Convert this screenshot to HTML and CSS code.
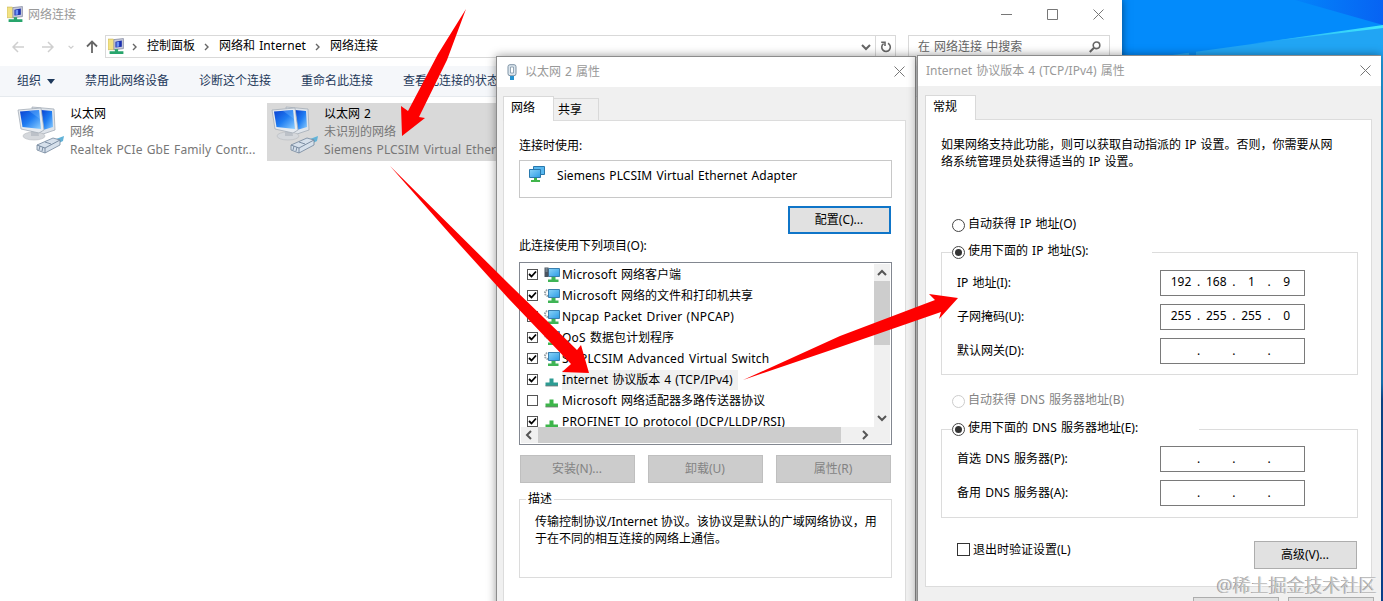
FILE: index.html
```
<!DOCTYPE html>
<html lang="zh-CN">
<head>
    <meta charset="UTF-8">
    <meta name="viewport" content="width=device-width, initial-scale=1.0">
    <title>网络连接</title>
    <link rel="stylesheet" href="styles.css">
</head>
<body>

    <!-- Iconos compartidos -->
    <svg class="sprite" width="0" height="0">
        <defs>
            <linearGradient id="screen" x1="0" y1="0" x2="1" y2="1">
                <stop offset="0" stop-color="#0a3fd0"/>
                <stop offset=".5" stop-color="#1f7df2"/>
                <stop offset="1" stop-color="#8fd0ff"/>
            </linearGradient>
            <linearGradient id="pane" x1="0" y1="0" x2="1" y2="1">
                <stop offset="0" stop-color="#8bd4f8"/>
                <stop offset="1" stop-color="#2d9be6"/>
            </linearGradient>
        </defs>
        <symbol id="i-net" viewBox="0 0 16 16">
            <path d="M0 1h5l1 1h3v9H0z" fill="#f2e283" stroke="#c9b75c" stroke-width=".6"/>
            <path d="M5.500 1.500l9-1v9.500l-9 1z" fill="#c6cadb" stroke="#8489a0" stroke-width=".7"/>
            <path d="M7 3.500L13 2.300v6L7 9z" fill="#1a2fae"/>
            <path d="M8 4l2.500-.5v4.500L8 8.500z" fill="#6f95f4"/>
            <path d="M6.500 10.500h3V12.500h5v2.500H1.500v-2.500h5z" fill="#28a56c"/>
        </symbol>
        <symbol id="i-adapter" viewBox="0 0 48 48">
            <path d="M15 1l22 2 1 21-12 4-9-3z" fill="#dfe4ea" stroke="#a5adb7" stroke-width=".8"/>
            <path d="M24 4l11 1 1 16-10 3z" fill="url(#screen)"/>
            <ellipse cx="17" cy="30" rx="11" ry="4" fill="#d5d8dc" stroke="#b5b8bd" stroke-width=".6"/>
            <path d="M14 24h7l1 6h-8z" fill="#bcc1c8"/>
            <path d="M1 4l23-2 3 22-5 3L4 23z" fill="#e6eaef" stroke="#a5adb7" stroke-width=".8"/>
            <path d="M3 5.500L22 4l2 19L5.500 21z" fill="url(#screen)"/>
            <path d="M12 5l10-1 1 9z" fill="#7ec1ff" opacity=".35"/>
            <path d="M39 33l8-3-1 5-8 4z" fill="#62b3d8"/>
            <path d="M20 39l16-7 7 2v5l-15 8-8-3z" fill="#d6e0eb" stroke="#72859b" stroke-width=".8"/>
            <path d="M20 39l8 3 15-8M28 42v5M23 40l-1 4M26 41l-1 4M28 36l6 2" fill="none" stroke="#72859b" stroke-width=".9"/>
        </symbol>
        <symbol id="i-client" viewBox="0 0 17 16">
            <path d="M4.500 1.500h11v8h-11z" fill="url(#pane)" stroke="#3a7fae"/>
            <path d="M7.500 10h4v2.500h3V15H4v-2.500h3.500z" fill="#3fb455"/>
            <path d="M.5 .5h4v9.500h-4z" fill="#4b5560"/>
            <path d="M1.500 2h2M1.500 4h2" stroke="#9fb0bb"/>
        </symbol>
        <symbol id="i-service" viewBox="0 0 17 16">
            <circle cx="4" cy="5" r="3" fill="none" stroke="#9aa3a8" stroke-width="2" stroke-dasharray="1.500 .8"/>
            <path d="M4.500 1.500h11v8h-11z" fill="url(#pane)" stroke="#3a7fae"/>
            <path d="M7.500 10h4v2.500h3V15H4v-2.500h3.500z" fill="#3fb455"/>
        </symbol>
        <symbol id="i-proto" viewBox="0 0 17 16">
            <path d="M5.500 6.500h4v4h4.500v3.500H1.500v-3.500h4z" fill="currentColor"/>
            <path d="M1.500 14h12.500" stroke="#777" stroke-width=".8"/>
        </symbol>
        <symbol id="i-tick" viewBox="0 0 11 11">
            <path d="M2 5L4.500 7.500L9 2.500" fill="none" stroke="#000" stroke-width="1.800"/>
        </symbol>
        <symbol id="i-close" viewBox="0 0 11 11">
            <path d="M.5 .5l10 10M10.500 .5l-10 10" stroke="currentColor" fill="none"/>
        </symbol>
        <symbol id="i-chev" viewBox="0 0 10 10">
            <path d="M1 3l4 4 4-4" fill="none" stroke="currentColor" stroke-width="2"/>
        </symbol>
        <symbol id="i-sep" viewBox="0 0 6 8">
            <path d="M1 1l3 3-3 3" fill="none" stroke="#666" stroke-width="1.400"/>
        </symbol>
    </svg>

    <!-- Fondo de escritorio -->
    <svg class="wallpaper" viewBox="0 0 1383 601">
        <defs>
            <linearGradient id="edge" x1="0" y1="0" x2="0" y2="1">
                <stop offset="0" stop-color="#22a6ee"/>
                <stop offset=".6" stop-color="#1b83cd"/>
                <stop offset=".63" stop-color="#0e4f9c"/>
                <stop offset="1" stop-color="#0b4ca6"/>
            </linearGradient>
            <linearGradient id="beam" x1="0" y1="0" x2="1" y2="0">
                <stop offset="0" stop-color="#21a5f4"/>
                <stop offset="1" stop-color="#41e8fc"/>
            </linearGradient>
            <linearGradient id="dusk" x1="0" y1="0" x2="1" y2="0">
                <stop offset="0" stop-color="#0384fa"/>
                <stop offset="1" stop-color="#0763f3"/>
            </linearGradient>
        </defs>
        <rect x="1100" width="283" height="601" fill="#038bfb"/>
        <path d="M1295 0h88v25z" fill="url(#dusk)"/>
        <path d="M1165 56l218-30v70h-218z" fill="#21a5f4"/>
        <path d="M1250 44L1383 25v3z" fill="url(#beam)"/>
        <path d="M1189 50h7v7h-7z" fill="#078cf3"/>
        <rect x="1378" y="56" width="5" height="545" fill="url(#edge)"/>
    </svg>

    <!-- Explorador -->
    <div class="window explorer">
        <div class="explorer-title">
            <svg class="net-icon" width="17" height="17"><use href="#i-net"/></svg>
            <span class="title-text">网络连接</span>
            <div class="caption">
                <svg width="11" height="11"><path d="M0 5.500h11" stroke="#777"/></svg>
                <svg width="11" height="11"><path d="M.5 .5h10v10H.5z" fill="none" stroke="#777"/></svg>
                <svg width="11" height="11"><use href="#i-close"/></svg>
            </div>
        </div>

        <div class="nav">
            <div class="nav-arrows">
                <svg width="12" height="12" viewBox="0 0 12 12"><path d="M12 6H1M6 1L1 6l5 5" fill="none" stroke="#cfcfcf" stroke-width="1.500"/></svg>
                <svg width="12" height="12" viewBox="0 0 12 12"><path d="M0 6h11M6 1l5 5-5 5" fill="none" stroke="#cfcfcf" stroke-width="1.500"/></svg>
                <svg class="recent" width="6" height="6" viewBox="0 0 10 10"><use href="#i-chev"/></svg>
                <svg width="12" height="13" viewBox="0 0 12 13"><path d="M6 13V1.500M1 6.500l5-5 5 5" fill="none" stroke="#666" stroke-width="1.800"/></svg>
            </div>
            <div class="address">
                <svg width="17" height="17"><use href="#i-net"/></svg>
                <svg class="sep first" width="6" height="8"><use href="#i-sep"/></svg>
                <span>控制面板</span>
                <svg class="sep" width="6" height="8"><use href="#i-sep"/></svg>
                <span>网络和 <span class="en">Internet</span></span>
                <svg class="sep" width="6" height="8"><use href="#i-sep"/></svg>
                <span>网络连接</span>
                <svg class="drop" width="10" height="10"><use href="#i-chev"/></svg>
                <div class="refresh">
                    <svg width="12" height="12" viewBox="0 0 12 12"><path d="M8 2.300A4.300 4.300 0 1 1 3.600 2.600M1.200 1.200h3.800v3.800" fill="none" stroke="#666" stroke-width="1.600"/></svg>
                </div>
            </div>
            <div class="search">
                <span>在 网络连接 中搜索</span>
                <svg width="12" height="12" viewBox="0 0 12 12"><circle cx="7.500" cy="4.300" r="3.300" fill="none" stroke="#666" stroke-width="1.600"/><path d="M5 6.800L.8 11" stroke="#666" stroke-width="2"/></svg>
            </div>
        </div>

        <div class="toolbar">
            <span class="organize">组织 <i class="caret"></i></span>
            <span>禁用此网络设备</span>
            <span>诊断这个连接</span>
            <span>重命名此连接</span>
            <span>查看此连接的状态</span>
        </div>

        <div class="connections">
            <div class="connection">
                <svg width="48" height="48"><use href="#i-adapter"/></svg>
                <div>
                    <p>以太网</p>
                    <p class="dim">网络</p>
                    <p class="dim en">Realtek PCIe GbE Family Contr...</p>
                </div>
            </div>
            <div class="connection selected">
                <svg width="48" height="48"><use href="#i-adapter"/></svg>
                <div>
                    <p>以太网 2</p>
                    <p class="dim">未识别的网络</p>
                    <p class="dim en">Siemens PLCSIM Virtual Ether</p>
                </div>
            </div>
        </div>
    </div>

    <!-- Propiedades del adaptador -->
    <div class="window dialog adapter-dialog">
        <div class="dialog-title">
            <svg class="plug" width="10" height="17" viewBox="0 0 10 17"><rect x="1" y=".7" width="8" height="11" rx="2" fill="#dce6ee" stroke="#7e93a5"/><path d="M3.500 3h3v6h-3z" fill="#fff" stroke="#7e93a5" stroke-width=".8"/><path d="M3 12h4v4H3z" fill="#2592cf"/></svg>
            <span class="title-text">以太网 2 属性</span>
            <svg class="close" width="11" height="11"><use href="#i-close"/></svg>
        </div>
        <div class="tabs">
            <div class="tab active">网络</div>
            <div class="tab">共享</div>
        </div>
        <div class="panel">
            <p class="label">连接时使用:</p>
            <div class="device">
                <svg width="18" height="17" viewBox="0 0 18 17"><path d="M5.500 .5h11v8h-11z" fill="#58b7ee" stroke="#2878ad"/><path d="M1.500 3.500h11v8h-11z" fill="url(#pane)" stroke="#2878ad"/><path d="M6 12h3v2h3v2H3v-2h3z" fill="#41b54c"/></svg>
                <span class="en">Siemens PLCSIM Virtual Ethernet Adapter</span>
            </div>
            <div class="button focus">配置(C)...</div>
            <p class="label items-label">此连接使用下列项目(O):</p>

            <div class="list">
                <div class="list-body">
                    <ul>
                        <li><i class="check"><svg width="11" height="11"><use href="#i-tick"/></svg></i><svg width="17" height="16"><use href="#i-client"/></svg><span><span class="en">Microsoft</span> 网络客户端</span></li>
                        <li><i class="check"><svg width="11" height="11"><use href="#i-tick"/></svg></i><svg width="17" height="16"><use href="#i-service"/></svg><span><span class="en">Microsoft</span> 网络的文件和打印机共享</span></li>
                        <li><i class="check"><svg width="11" height="11"><use href="#i-tick"/></svg></i><svg width="17" height="16"><use href="#i-service"/></svg><span class="en">Npcap Packet Driver (NPCAP)</span></li>
                        <li><i class="check"><svg width="11" height="11"><use href="#i-tick"/></svg></i><svg width="17" height="16"><use href="#i-service"/></svg><span><span class="en">QoS</span> 数据包计划程序</span></li>
                        <li><i class="check"><svg width="11" height="11"><use href="#i-tick"/></svg></i><svg width="17" height="16"><use href="#i-service"/></svg><span class="en">S7-PLCSIM Advanced Virtual Switch</span></li>
                        <li><i class="check"><svg width="11" height="11"><use href="#i-tick"/></svg></i><svg class="teal" width="17" height="16"><use href="#i-proto"/></svg><span class="current">Internet 协议版本 4 (TCP/IPv4)</span></li>
                        <li><i class="check"></i><svg class="green" width="17" height="16"><use href="#i-proto"/></svg><span><span class="en">Microsoft</span> 网络适配器多路传送器协议</span></li>
                        <li><i class="check"><svg width="11" height="11"><use href="#i-tick"/></svg></i><svg class="green" width="17" height="16"><use href="#i-proto"/></svg><span class="en">PROFINET IO protocol (DCP/LLDP/RSI)</span></li>
                    </ul>
                    <div class="vscroll">
                        <svg class="up" width="10" height="10"><use href="#i-chev"/></svg>
                        <div class="thumb"></div>
                        <svg class="down" width="10" height="10"><use href="#i-chev"/></svg>
                    </div>
                </div>
                <div class="hscroll">
                    <svg class="left" width="10" height="10"><use href="#i-chev"/></svg>
                    <div class="thumb"></div>
                    <svg class="right" width="10" height="10"><use href="#i-chev"/></svg>
                </div>
            </div>

            <div class="actions">
                <div class="button disabled">安装(N)...</div>
                <div class="button disabled">卸载(U)</div>
                <div class="button disabled">属性(R)</div>
            </div>

            <fieldset class="description">
                <legend>描述</legend>
                <p>传输控制协议/Internet 协议。该协议是默认的广域网络协议，用<br>于在不同的相互连接的网络上通信。</p>
            </fieldset>
        </div>
    </div>

    <!-- Propiedades de IPv4 -->
    <div class="window dialog ip-dialog">
        <div class="dialog-title">
            <span class="title-text">Internet 协议版本 4 (TCP/IPv4) 属性</span>
            <svg class="close" width="11" height="11"><use href="#i-close"/></svg>
        </div>
        <div class="tabs">
            <div class="tab active">常规</div>
        </div>
        <div class="panel">
            <p class="intro">如果网络支持此功能，则可以获取自动指派的 IP 设置。否则，你需要从网<br>络系统管理员处获得适当的 IP 设置。</p>

            <div class="option auto-ip"><i class="radio"></i><span>自动获得 IP 地址(O)</span></div>
            <fieldset class="group ip-group">
                <legend class="option"><i class="radio on"></i><span>使用下面的 IP 地址(S):</span></legend>
                <div class="field"><span>IP 地址(I):</span><div class="ip"><b>192</b>.<b>168</b>.<b>1</b>.<b>9</b></div></div>
                <div class="field"><span>子网掩码(U):</span><div class="ip"><b>255</b>.<b>255</b>.<b>255</b>.<b>0</b></div></div>
                <div class="field"><span>默认网关(D):</span><div class="ip empty"><b></b>.<b></b>.<b></b>.<b></b></div></div>
            </fieldset>

            <div class="option auto-dns off"><i class="radio"></i><span>自动获得 <span class="en">DNS</span> 服务器地址(B)</span></div>
            <fieldset class="group dns-group">
                <legend class="option"><i class="radio on"></i><span>使用下面的 <span class="en">DNS</span> 服务器地址(E):</span></legend>
                <div class="field"><span>首选 <span class="en">DNS</span> 服务器(P):</span><div class="ip empty"><b></b>.<b></b>.<b></b>.<b></b></div></div>
                <div class="field"><span>备用 <span class="en">DNS</span> 服务器(A):</span><div class="ip empty"><b></b>.<b></b>.<b></b>.<b></b></div></div>
            </fieldset>

            <div class="footer-row">
                <div class="validate"><i class="box"></i><span>退出时验证设置(L)</span></div>
                <div class="button">高级(V)...</div>
            </div>
        </div>
        <div class="dialog-buttons">
            <div class="button"></div>
            <div class="button"></div>
        </div>
    </div>

    <!-- Flechas -->
    <svg class="arrows" viewBox="0 0 1383 601">
        <path d="M466 9L438 54L408 111L401 106L402 136L425 118L419 117L447 60Z"/>
        <path d="M390 166L510 285L577 350L581 345L589 373L562 372L571 364L508 298L450 234Z"/>
        <path d="M743 380L840 336L935 300L929 294L958 298L939 319L941 312L840 347Z"/>
    </svg>

    <div class="watermark">@稀土掘金技术社区</div>

</body>
</html>
```
FILE: styles.css
```
* {
    box-sizing: border-box;
}

body {
    margin: 0;
    width: 1383px;
    height: 601px;
    overflow: hidden;
    position: relative;
    font-family: "Noto Sans", "Noto Sans CJK SC", sans-serif;
    font-size: 12px;
    line-height: 18px;
    word-spacing: 1px;
    color: #000;
}

p {
    margin: 0;
}

i {
    font-style: normal;
}

svg {
    display: block;
    flex: none;
}

span {
    white-space: nowrap;
}

.en {
    letter-spacing: 0.1px;
}

.sprite {
    position: absolute;
}

.wallpaper,
.arrows {
    position: absolute;
    left: 0;
    top: 0;
    width: 1383px;
    height: 601px;
}

.arrows {
    fill: #fe0000;
}

/* Ventanas */
.window {
    position: absolute;
    overflow: hidden;
}

.title-text {
    color: #999;
}

/* Explorador */
.explorer {
    left: 0;
    top: 0;
    width: 1122px;
    height: 601px;
    background-color: #fff;
    box-shadow: 0 0 8px rgba(0, 0, 0, 0.5);
}

.explorer-title {
    display: flex;
    align-items: center;
    height: 30px;
    padding: 0 18px 2px 7px;
}

.explorer-title .title-text {
    margin: 1px 0 0 4px;
}

.caption {
    display: flex;
    gap: 35px;
    margin-left: auto;
    color: #777;
}

.nav {
    display: flex;
    align-items: center;
    height: 36px;
    padding-bottom: 3px;
}

.nav-arrows {
    display: flex;
    align-items: center;
    width: 105px;
    padding-left: 12px;
}

.nav-arrows svg {
    margin-right: 18px;
}

.nav-arrows svg.recent {
    margin: 0 12px 0 -4px;
    color: #ccc;
}

.nav-arrows svg:last-child {
    margin-right: 0;
}

.address {
    display: flex;
    align-items: center;
    width: 791px;
    height: 23px;
    padding-left: 2px;
    border: 1px solid #d9d9d9;
}

.address span {
    margin-top: -1px;
}

.address .sep {
    margin: 0 9px;
}

.address .sep.first {
    margin-left: 7px;
}

.address .drop {
    margin-left: auto;
    margin-right: 4px;
    color: #666;
}

.refresh {
    display: flex;
    align-items: center;
    width: 20px;
    height: 21px;
    padding-left: 4px;
    border-left: 1px solid #d9d9d9;
}

.search {
    display: flex;
    align-items: center;
    justify-content: space-between;
    width: 202px;
    height: 23px;
    margin-left: 12px;
    padding: 0 8px 0 9px;
    border: 1px solid #d9d9d9;
    color: #666;
}

.toolbar {
    display: flex;
    gap: 30px;
    height: 31px;
    padding: 6px 0 0 17px;
    border-bottom: 1px solid #e6eaee;
    background-color: #f5f7fa;
    color: #1e395b;
}

.organize {
    display: flex;
    align-items: center;
    height: 18px;
}

.caret {
    margin-left: 6px;
    border: 4px solid transparent;
    border-top: 5px solid #1e395b;
    border-bottom: 0;
}

.connections {
    display: flex;
    gap: 2px;
    padding: 6px 0 0 13px;
}

.connection {
    display: flex;
    width: 252px;
    height: 58px;
    padding: 2px 0 0 4px;
}

.connection > div {
    margin-left: 5px;
    white-space: nowrap;
}

.connection svg {
    margin-top: 1px;
}

.connection.selected {
    width: 260px;
    background-color: #d9d9d9;
}

.dim {
    color: #777;
}

/* Cuadros de diálogo */
.dialog {
    height: 560px;
    background-color: #f0f0f0;
    border: 1px solid #8c8c8c;
    box-shadow: 0 0 9px rgba(0, 0, 0, 0.4);
}

.adapter-dialog {
    left: 496px;
    top: 56px;
    width: 420px;
}

.ip-dialog {
    left: 917px;
    top: 55px;
    width: 464px;
    border-right: 0;
}

.dialog-title {
    display: flex;
    align-items: center;
    height: 30px;
    padding-left: 10px;
    background-color: #fff;
}

.dialog-title .plug {
    margin-right: 8px;
}

.dialog-title .close {
    margin: -2px 10px 0 auto;
    color: #777;
}

.tabs {
    display: flex;
    align-items: flex-end;
    height: 33px;
    padding-left: 6px;
}

.tab {
    width: 45px;
    height: 22px;
    padding: 2px 0 0 4px;
    border: 1px solid #d9d9d9;
    border-left: 0;
    border-bottom: 0;
}

.tab.active {
    position: relative;
    z-index: 1;
    width: 51px;
    height: 25px;
    margin-bottom: -1px;
    padding: 2px 0 0 7px;
    border-left: 1px solid #d9d9d9;
    background-color: #fff;
}

.panel {
    border: 1px solid #dcdcdc;
    background-color: #fff;
}

.button {
    display: flex;
    align-items: center;
    justify-content: center;
    width: 103px;
    height: 28px;
    padding-right: 1px;
    border: 1px solid #adadad;
    background-color: #e1e1e1;
}

.button.focus {
    border: 2px solid #0f75c8;
}

.button.disabled {
    width: 115px;
    border-color: #bfbfbf;
    background-color: #ccc;
    color: #838383;
}

/* Propiedades del adaptador */
.adapter-dialog .panel {
    width: 403px;
    height: 500px;
    margin-left: 6px;
    padding: 16px 13px 0 15px;
}

.device {
    display: flex;
    height: 38px;
    margin-top: 5px;
    padding: 5px 0 0 8px;
    border: 1px solid #c8c8c8;
}

.device span {
    margin: 1px 0 0 11px;
    letter-spacing: 0.08px;
}

.adapter-dialog .focus {
    margin: 8px 0 0 269px;
}

.items-label {
    margin-top: 3px;
}

.list {
    width: 373px;
    height: 183px;
    margin-top: 7px;
    padding: 1px;
    border: 1px solid #828790;
}

.list-body {
    display: flex;
    height: 163px;
    overflow: hidden;
}

.list ul {
    flex: 1;
    margin: 0;
    padding: 0 0 0 6px;
    list-style: none;
}

.list li {
    display: flex;
    align-items: center;
    height: 21px;
}

.list li > svg {
    margin: 0 1px 0 6px;
}

.list .en {
    letter-spacing: 0.2px;
}

.check {
    width: 11px;
    height: 11px;
    flex: none;
    margin-top: -1px;
    outline: 1px solid #555;
    outline-offset: -1px;
}

.current {
    padding: 1px 5px 1px 0;
    background-color: #f0f0f0;
}

.teal {
    color: #2d9c93;
}

.green {
    color: #3db54a;
}

.vscroll {
    display: flex;
    flex-direction: column;
    align-items: center;
    width: 16px;
    padding: 4px 0;
    background-color: #f0f0f0;
    color: #555;
}

.vscroll .thumb {
    width: 16px;
    height: 64px;
    margin-top: 3px;
    background-color: #cdcdcd;
}

.vscroll .down {
    margin-top: auto;
}

.up {
    transform: rotate(180deg);
}

.hscroll {
    display: flex;
    align-items: center;
    height: 16px;
    padding: 0 20px 0 3px;
    background-color: #f0f0f0;
    color: #555;
}

.hscroll .thumb {
    width: 303px;
    height: 16px;
    margin-left: 4px;
    background-color: #cdcdcd;
}

.left {
    transform: rotate(90deg);
}

.right {
    margin-left: auto;
    transform: rotate(-90deg);
}

.actions {
    display: flex;
    gap: 13px;
    margin: 10px 0 0 1px;
}

fieldset {
    margin: 0;
    padding: 0;
    border: 1px solid #dcdcdc;
}

.description {
    height: 88px;
    margin-top: 7px;
}

.description legend {
    margin-left: 6px;
    padding: 0 2px;
}

.description p {
    padding: 5px 0 0 15px;
    line-height: 17px;
    white-space: nowrap;
    word-spacing: 0;
}

/* Propiedades de IPv4 */
.ip-dialog .dialog-title {
    padding-left: 8px;
}

.ip-dialog .tabs {
    padding-left: 7px;
}

.ip-dialog .panel {
    width: 447px;
    height: 468px;
    margin-left: 7px;
    padding: 16px 13px 0 15px;
}

.intro {
    line-height: 17px;
    white-space: nowrap;
}

.option {
    display: flex;
    align-items: center;
    height: 20px;
}

.option span {
    margin-left: 3px;
    margin-top: -2px;
}

.option span span {
    margin: 0;
}

.radio {
    display: flex;
    align-items: center;
    justify-content: center;
    width: 13px;
    height: 13px;
    border: 1px solid #444;
    border-radius: 50%;
}

.radio.on::after {
    content: "";
    width: 7px;
    height: 7px;
    border-radius: 50%;
    background-color: #333;
}

.off {
    color: #838383;
}

.off .radio {
    border-color: #ccc;
}

.auto-ip {
    margin: 45px 0 7px 11px;
}

.auto-dns {
    margin: 16px 0 8px 11px;
}

.group {
    width: 417px;
}

.group legend {
    width: 200px;
    margin-left: 10px;
    padding: 0;
}

.ip-group {
    height: 133px;
}

.dns-group {
    height: 99px;
}

.dns-group legend {
    width: 247px;
}

.field {
    display: flex;
    justify-content: space-between;
    align-items: center;
    height: 26px;
    margin: 8px 52px 0 15px;
}

.dns-group legend + .field {
    margin-top: 7px;
}

.ip {
    display: flex;
    width: 145px;
    height: 26px;
    padding: 2px 0 0 8px;
    border: 1px solid #7a7a7a;
}

.ip.empty {
    padding-top: 3px;
}

.ip b {
    width: 24px;
    margin-right: 4px;
    margin-left: 4px;
    font-weight: normal;
    text-align: center;
}

.ip b:first-child {
    margin-left: 0;
}

.footer-row {
    display: flex;
    justify-content: space-between;
    margin: 23px 1px 0 16px;
}

.validate {
    display: flex;
    height: 18px;
}

.box {
    width: 13px;
    height: 13px;
    margin: 2px 3px 0 0;
    border: 1px solid #333;
}

.dialog-buttons {
    display: flex;
    gap: 9px;
    margin: 10px 0 0 275px;
}

.dialog-buttons .button {
    width: 86px;
}

.watermark {
    position: absolute;
    left: 1217px;
    top: 572px;
    font-size: 18px;
    font-weight: 300;
    line-height: 26px;
    white-space: nowrap;
    color: #c4c4c4;
    text-shadow: -1px 0 0 #8f8f8f, 1px 1px 0 #f4f4f4;
}
```
